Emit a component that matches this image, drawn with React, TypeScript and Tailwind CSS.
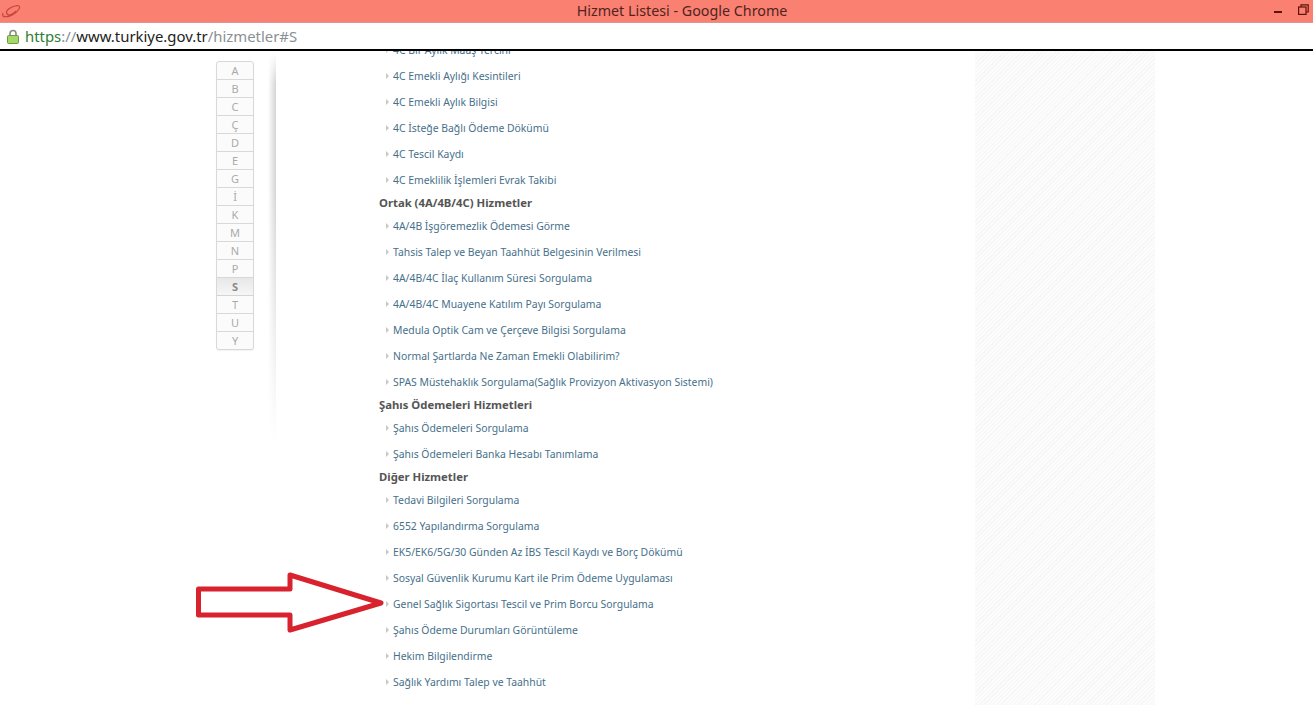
const letters = ["A","B","C","Ç","D","E","G","İ","K","M","N","P","S","T","U","Y"];
type Row = { h?: string; t?: string };
const rows: Row[] = [
  { t: "4C Bir Aylık Maaş Tercihi" },
  { t: "4C Emekli Aylığı Kesintileri" },
  { t: "4C Emekli Aylık Bilgisi" },
  { t: "4C İsteğe Bağlı Ödeme Dökümü" },
  { t: "4C Tescil Kaydı" },
  { t: "4C Emeklilik İşlemleri Evrak Takibi" },
  { h: "Ortak (4A/4B/4C) Hizmetler" },
  { t: "4A/4B İşgöremezlik Ödemesi Görme" },
  { t: "Tahsis Talep ve Beyan Taahhüt Belgesinin Verilmesi" },
  { t: "4A/4B/4C İlaç Kullanım Süresi Sorgulama" },
  { t: "4A/4B/4C Muayene Katılım Payı Sorgulama" },
  { t: "Medula Optik Cam ve Çerçeve Bilgisi Sorgulama" },
  { t: "Normal Şartlarda Ne Zaman Emekli Olabilirim?" },
  { t: "SPAS Müstehaklık Sorgulama(Sağlık Provizyon Aktivasyon Sistemi)" },
  { h: "Şahıs Ödemeleri Hizmetleri" },
  { t: "Şahıs Ödemeleri Sorgulama" },
  { t: "Şahıs Ödemeleri Banka Hesabı Tanımlama" },
  { h: "Diğer Hizmetler" },
  { t: "Tedavi Bilgileri Sorgulama" },
  { t: "6552 Yapılandırma Sorgulama" },
  { t: "EK5/EK6/5G/30 Günden Az İBS Tescil Kaydı ve Borç Dökümü" },
  { t: "Sosyal Güvenlik Kurumu Kart ile Prim Ödeme Uygulaması" },
  { t: "Genel Sağlık Sigortası Tescil ve Prim Borcu Sorgulama" },
  { t: "Şahıs Ödeme Durumları Görüntüleme" },
  { t: "Hekim Bilgilendirme" },
  { t: "Sağlık Yardımı Talep ve Taahhüt" },
];

export default function App() {
  return (
    <div className="relative flex h-[705px] w-[1313px] flex-col overflow-hidden bg-white font-['Noto_Sans',sans-serif]">
      <div className="relative flex h-[23px] shrink-0 items-center justify-center border-b border-[#e0968c] bg-[#fa8072] pl-[51px]">
        <svg className="absolute left-[1px] top-[4px]" width="20" height="15" viewBox="0 0 20 15" fill="none" stroke="#c9453e" strokeWidth="1.2">
          <path d="M3 12c4 2 12-2 15-7 2-3-1-4-4-3C9 3 4 7 6 10c2 2 6 0 9-3" />
          <path d="M2 9c-1 2 0 4 2 4" />
        </svg>
        <span className="text-[14.3px] leading-none text-[#4f2420]">Hizmet Listesi - Google Chrome</span>
        <span className="absolute left-[1274px] top-[11px] h-[2px] w-[8px] bg-[#5e1208]" />
        <svg className="absolute left-[1298px] top-[4px]" width="11" height="11" viewBox="0 0 11 11" fill="none" stroke="#5e1208" strokeWidth="1.2">
          <rect x="0.6" y="3" width="7.4" height="7.4" />
          <path d="M3 3V0.8h7.2V8H8" />
        </svg>
      </div>
      <div className="flex h-[28px] shrink-0 items-center border-b-2 border-black bg-white pl-[7px]">
        <svg width="12" height="15" viewBox="0 0 12 15" className="mr-[6px]">
          <path d="M3 7V4.5a3 3 0 0 1 6 0V7" fill="none" stroke="#8a8a8a" strokeWidth="1.6" />
          <rect x="0.5" y="6.5" width="11" height="8" rx="1" fill="#a5d86a" stroke="#6f9b3c" />
        </svg>
        <span className="text-[14.9px] leading-none text-[#8a8f93]">
          <span className="text-[#2e7d32]">https</span>
          ://
          <span className="text-[#222]">www.turkiye.gov.tr</span>
          /hizmetler#S
        </span>
      </div>
      <div className="flex min-h-0 flex-1 overflow-hidden">
        <div className="ml-[216px] mt-[10px] flex h-fit w-[38px] flex-col rounded-[3px] border border-[#d8d8d8] bg-[#fbfbfb] shadow-[0_1px_1px_rgba(0,0,0,0.05)]">
          {letters.map((l, i) => (
            <div
              key={l}
              className={
                l === "S"
                  ? "flex h-[18px] items-center justify-center border-b border-[#d4d4d4] bg-gradient-to-b from-[#e8e8e8] to-[#f6f6f6] text-[11px] font-bold leading-none text-[#8a8a8a]"
                  : i === letters.length - 1
                    ? "flex h-[17px] items-center justify-center text-[11px] leading-none text-[#aaaaaa]"
                    : "flex h-[18px] items-center justify-center border-b border-[#d8d8d8] text-[11px] leading-none text-[#aaaaaa]"
              }
            >
              {l}
            </div>
          ))}
        </div>
        <div className="ml-[14px] mt-[2px] h-[390px] w-[8px] bg-gradient-to-r from-white to-[#d4d4d4] [mask-image:linear-gradient(to_bottom,transparent,black_8%,black_35%,transparent)]" />
        <div className="ml-[103px] mt-[-14px] w-[596px] shrink-0">
          {rows.map((r, i) =>
            r.h ? (
              <div key={i} className="flex h-[20px] items-center text-[11.3px] font-bold leading-none text-[#555555]">
                {r.h}
              </div>
            ) : (
              <div key={i} className="flex h-[26px] items-center pl-[7px] text-[10.4px] leading-none text-[#46708a]">
                <span className="mr-[4px] h-0 w-0 border-y-[3px] border-l-[3px] border-y-transparent border-l-[#c8c8c8]" />
                {r.t}
              </div>
            )
          )}
        </div>
        <div className="h-full w-[180px] shrink-0 bg-[repeating-linear-gradient(135deg,#f6f6f6_0,#f6f6f6_1px,#fcfcfc_1px,#fcfcfc_3px)]" />
      </div>
      <svg className="absolute left-[195px] top-[571px]" width="190" height="63" viewBox="0 0 190 63" fill="none">
        <path d="M3.5 18H95V4L186 32L95 59V44H3.5Z" stroke="#d8232f" strokeWidth="5" strokeLinejoin="round" />
      </svg>
    </div>
  );
}
